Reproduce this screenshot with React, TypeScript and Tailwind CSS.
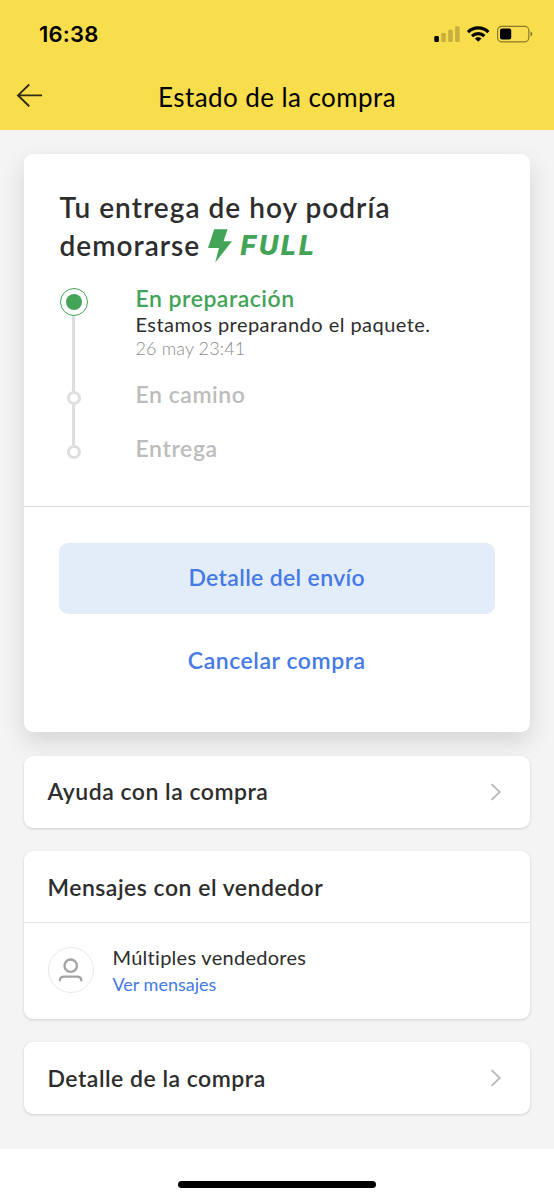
import type { ReactNode } from "react";

function StatusIcons() {
  return (
    <svg width="100" height="20" viewBox="0 0 100 20" fill="none" aria-hidden="true">
      <rect x="0.3" y="12" width="4.6" height="6" rx="1.3" fill="#000" />
      <g fill="#000" fillOpacity="0.2">
        <rect x="7.2" y="9" width="4.6" height="9" rx="1.3" />
        <rect x="14.2" y="5.8" width="4.6" height="12.2" rx="1.3" />
        <rect x="21.1" y="2.3" width="4.6" height="15.7" rx="1.3" />
      </g>
      <g stroke="#000" strokeWidth="3.1">
        <path d="M34 8.1 A14.5 14.5 0 0 1 54.4 8.1" />
        <path d="M38 12.2 A8.8 8.8 0 0 1 50.4 12.2" />
      </g>
      <path d="M44.2 17.8 L40.9 14.5 A4.8 4.8 0 0 1 47.5 14.5 Z" fill="#000" />
      <rect x="63.6" y="2.4" width="31.2" height="15.4" rx="4" stroke="#000" strokeOpacity="0.45" strokeWidth="1.2" />
      <rect x="66" y="4.6" width="11.2" height="11" rx="2" fill="#000" />
      <path d="M96.6 7.6 C98.8 8.4 98.8 11.8 96.6 12.6 Z" fill="#000" fillOpacity="0.5" />
    </svg>
  );
}

function Chevron() {
  return (
    <svg width="12" height="18" viewBox="0 0 12 18" fill="none" stroke="#b8b8b8" strokeWidth="1.8" aria-hidden="true">
      <path d="M1.5 1.2 L9.8 9 L1.5 16.8" />
    </svg>
  );
}

function Card({ children }: { children: ReactNode }) {
  return (
    <section className="overflow-hidden rounded-[9px] bg-white shadow-[0_1px_3px_rgba(0,0,0,0.16)]">{children}</section>
  );
}

function LinkRow({ label }: { label: string }) {
  return (
    <Card>
      <button className="flex h-[72px] w-full items-center justify-between pr-[28px] pl-[23.5px] text-left">
        <span className="pb-px text-[23px] leading-7 font-semibold tracking-[0.5px]">{label}</span>
        <Chevron />
      </button>
    </Card>
  );
}

function Timeline() {
  return (
    <div className="flex w-7 flex-col items-center pt-[3.5px]">
      <div className="flex size-7 items-center justify-center rounded-full border-[1.5px] border-[#43a457]">
        <div className="size-4 rounded-full bg-[#43a457]" />
      </div>
      <div className="h-[75px] w-[3px] bg-[#dedede]" />
      <div className="size-[14px] rounded-full border-[3px] border-[#dedede]" />
      <div className="h-10 w-[3px] bg-[#dedede]" />
      <div className="size-[14px] rounded-full border-[3px] border-[#dedede]" />
    </div>
  );
}

export default function App() {
  return (
    <div className="flex h-[1200px] w-[554px] flex-col bg-white font-[Lato,sans-serif] text-[#2d2d2d]">
      <header className="h-[130px] bg-[#f8dd4d] text-black">
        <div className="flex h-[68px] items-center justify-between pr-[20px] pl-[39px]">
          <span className="font-[Inter,sans-serif] text-[22px] leading-7 font-semibold tracking-[0.2px]">16:38</span>
          <StatusIcons />
        </div>
        <div className="grid grid-cols-[1fr_auto_1fr] items-start pt-[14px]">
          <svg className="mt-[1px] ml-4" width="28" height="26" viewBox="0 0 28 26" fill="none" stroke="#332d10" strokeWidth="1.9" aria-hidden="true">
            <path d="M26 12.4 H2.2 M13.2 1.5 L2 12.4 L13.2 23.3" />
          </svg>
          <h1 className="text-[26px] leading-[30px] tracking-[0.42px]">Estado de la compra</h1>
        </div>
      </header>

      <main className="flex h-[1019px] flex-col gap-[23.5px] bg-[#f4f4f4] px-6 pt-6">
        <section className="rounded-[9px] bg-white shadow-[0_10px_24px_rgba(0,0,0,0.13)]">
          <div className="h-[352.5px] border-b-[1.5px] border-[#dfdfdf] pt-[34px] pr-9 pl-[35.5px]">
            <h2 className="text-[28px] leading-[38px] font-semibold tracking-[1.03px]">
              Tu entrega de hoy podría
              <span className="flex">
                demorarse
                <svg className="mt-[2px] ml-[7px]" width="26" height="36" viewBox="0 0 26 36" fill="#43a457" aria-hidden="true">
                  <path d="M7.2 1.2 H20.6 L16.6 13.2 H25 L8.2 34.5 L12 20 H1 Z" />
                </svg>
                <span className="ml-[7px] font-[Inter,sans-serif] text-[27px] leading-10 font-extrabold tracking-[2.6px] text-[#43a457] italic h-[38px]">FULL</span>
              </span>
            </h2>
            <div className="mt-5 flex gap-12">
              <Timeline />
              <div className="flex flex-col whitespace-nowrap">
                <span className="text-[23px] leading-[28px] font-semibold tracking-[0.5px] text-[#43a457]">En preparación</span>
                <span className="text-[20px] leading-[25px] tracking-[0.46px]">Estamos preparando el paquete.</span>
                <span className="text-[18px] leading-[22px] font-light tracking-[0.12px] text-[#8c8c8c]">26 may 23:41</span>
                <span className="mt-[22px] text-[23px] leading-[27px] font-semibold tracking-[0.55px] text-[#bcbcbc]">En camino</span>
                <span className="mt-[27px] text-[23px] leading-[27px] font-semibold tracking-[0.6px] text-[#bcbcbc]">Entrega</span>
              </div>
            </div>
          </div>
          <div className="flex h-[225.5px] flex-col pt-[36.5px] pr-[35.5px] pl-[35px] text-[23px] leading-7 font-semibold text-[#4479e6]">
            <button className="h-[71px] rounded-[9px] bg-[#e3edf9] pb-[3px] tracking-[0.35px]">Detalle del envío</button>
            <button className="mt-3 h-[71px] pb-[4px] tracking-[0.55px]">Cancelar compra</button>
          </div>
        </section>

        <LinkRow label="Ayuda con la compra" />

        <Card>
          <div className="flex h-[72px] items-center border-b-[1.5px] border-[#e4e4e4] pl-[23.5px]">
            <span className="text-[23px] leading-7 font-semibold tracking-[0.5px]">Mensajes con el vendedor</span>
          </div>
          <div className="flex h-[95.5px] items-center gap-[19px] pb-[2px] pl-[23.5px]">
            <div className="flex size-[46px] items-center justify-center rounded-full border-[1.5px] border-[#e8e8e8]">
              <svg width="26" height="26" viewBox="0 0 26 26" fill="none" stroke="#a3a3a3" strokeWidth="2.3" aria-hidden="true">
                <circle cx="12.7" cy="8.7" r="6.2" />
                <path d="M1.9 24.2 V23.4 C1.9 20.8 3.7 19.6 6.1 19.6 H18.9 C21.3 19.6 23.3 20.8 23.3 23.4 V24.2" />
              </svg>
            </div>
            <div className="flex flex-col">
              <span className="text-[20px] leading-7 tracking-[0.28px]">Múltiples vendedores</span>
              <span className="text-[18px] leading-[26px] text-[#4479e6]">Ver mensajes</span>
            </div>
          </div>
        </Card>

        <LinkRow label="Detalle de la compra" />
      </main>

      <footer className="flex flex-1 justify-center pt-[31.5px]">
        <div className="h-[7.5px] w-[198px] rounded-full bg-black" />
      </footer>
    </div>
  );
}
